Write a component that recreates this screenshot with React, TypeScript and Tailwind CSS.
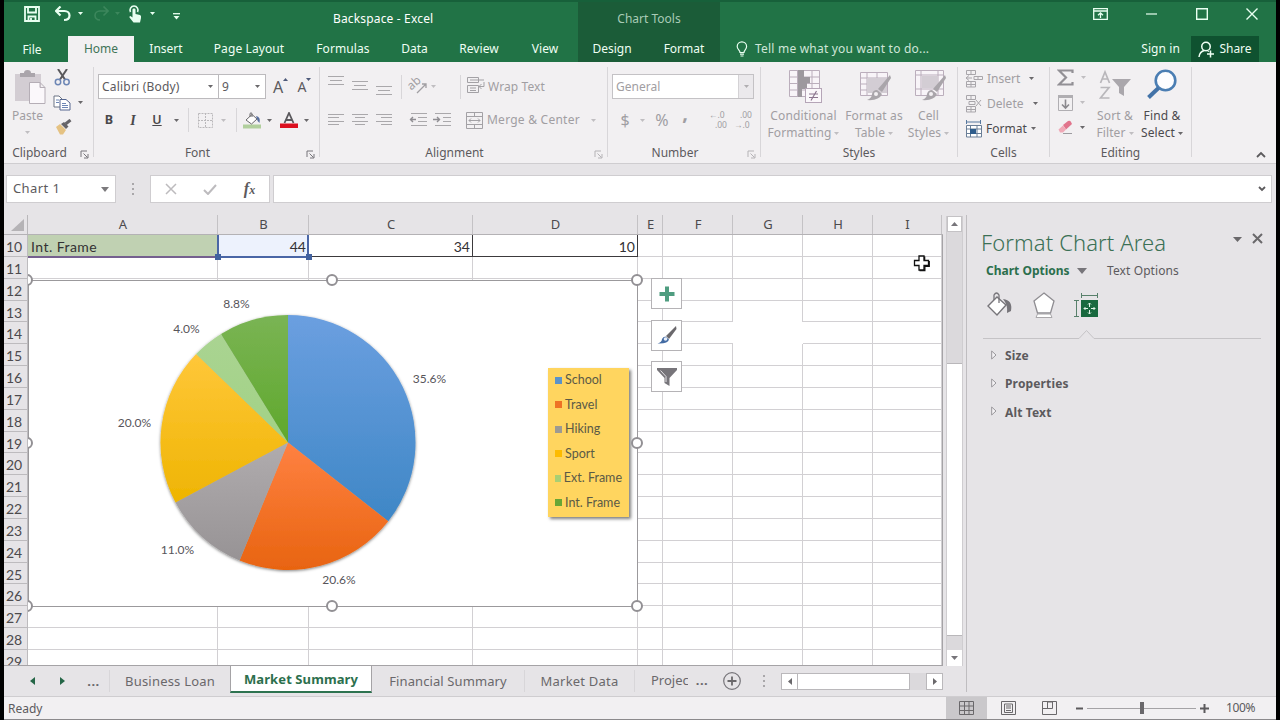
import React, { ReactNode } from 'react';
import clsx from 'clsx';

interface BoxProps {
  className?: string;
  children?: ReactNode;
}

interface IconProps {
  w: number;
  h: number;
  className?: string;
  children: ReactNode;
}

const Icon: React.FC<IconProps> = ({ w, h, className, children }) => (
  <svg width={w} height={h} viewBox={`0 0 ${w} ${h}`} fill="none" className={clsx('shrink-0', className)}>
    {children}
  </svg>
);

const Cell: React.FC<BoxProps> = ({ className, children }) => (
  <div className={clsx('flex shrink-0 items-center justify-center whitespace-nowrap', className)}>{children}</div>
);

const Caret: React.FC<{ className?: string }> = ({ className = 'text-[#6a686b]' }) => (
  <Icon w={5} h={3} className={className}>
    <path d="M0 0H5L2.5 3Z" fill="currentColor" />
  </Icon>
);

const Sep: React.FC<{ className?: string }> = ({ className = 'h-6' }) => (
  <div className={clsx('w-px shrink-0 bg-[#d8d6d9]', className)} />
);

const Launcher: React.FC<{ className?: string }> = ({ className = 'text-[#77757a]' }) => (
  <Icon w={9} h={9} className={className}>
    <path d="M1 7V1H7M3.5 3.5L7.5 7.5M8 4V8H4" stroke="currentColor" />
  </Icon>
);

/* ---------- Title bar and tabs ---------- */

const TitleBar = () => (
  <div className="flex h-9 border-t-2 border-[#17603a] text-white">
    <div className="flex w-[574px] items-start">
      <Cell className="ml-[20px] mt-[4px] w-4">
        <Icon w={16} h={16}>
          <path d="M1 1H15V15H1ZM4 1V6.5H12V1M4.5 15V10.5H11.5V15M7 12V15" stroke="#e9fff1" strokeWidth="1.8" />
        </Icon>
      </Cell>
      <Cell className="ml-[15px] mt-[4px] w-4">
        <Icon w={16} h={16}>
          <path d="M1 5H9.5C12.5 5 14.5 7 14.5 9.5S12.5 14 9 14M5.500 .5L1 5L5.500 9.500" stroke="#e9fff1" strokeWidth="2.2" />
        </Icon>
      </Cell>
      <Cell className="mt-[10px] w-[18px]"><Caret className="text-[#e9fff1]" /></Cell>
      <Cell className="ml-[4px] mt-[4px] w-4">
        <Icon w={16} h={16}>
          <path d="M15 5H7C4 5 2 7 2 9.500S4 14 7 14M10.500 .5L15 5L10.500 9.500" stroke="#3c875c" strokeWidth="1.6" />
        </Icon>
      </Cell>
      <Cell className="mt-[10px] w-[16px]"><Caret className="text-[#3c875c]" /></Cell>
      <Cell className="ml-[2px] mt-[3px] w-4">
        <Icon w={14} h={18}>
          <path d="M2.500 7A4 4 0 1 1 9.500 7" stroke="#e9fff1" strokeWidth="1.600" />
          <path d="M4.500 4.500C4.500 3 7.500 3 7.500 4.500V9L12 10Q13.500 10.500 13 13L12 17.500H5.500L1.500 12.500Q1 11 2.500 11L4.500 12.500Z" fill="#e9fff1" />
        </Icon>
      </Cell>
      <Cell className="mt-[10px] w-[18px]"><Caret className="text-[#e9fff1]" /></Cell>
      <Cell className="ml-[8px] mt-[11px] w-[14px]">
        <Icon w={7} h={7}>
          <path d="M0 .7H7" stroke="#e9fff1" strokeWidth="1.300" />
          <path d="M.5 3H6.500L3.500 6.500Z" fill="#e9fff1" />
        </Icon>
      </Cell>
      <div className="ml-[150px] mt-[8px] whitespace-nowrap text-[12px] leading-[18px] tracking-[0.16px]">Backspace - Excel</div>
    </div>
    <div className="w-[142px] bg-[#1b5c38] pt-[8px] text-center text-[12px] leading-[18px] text-[#a9cbb6]">Chart Tools</div>
    <div className="flex flex-1 items-start justify-end pt-[4px]">
      <Cell className="h-4 w-[50px]">
        <Icon w={15} h={12} className="-ml-[2px]">
          <path d="M.7 .7H14.300V11.300H.7ZM.7 3H14.300M7.500 10V5M5 7.300L7.500 4.800L10 7.300" stroke="#e9fff1" strokeWidth="1.300" />
        </Icon>
      </Cell>
      <Cell className="h-4 w-[51px]"><Icon w={11} h={2}><path d="M0 1H11" stroke="#e9fff1" strokeWidth="1.200" /></Icon></Cell>
      <Cell className="h-4 w-[50px]"><Icon w={12} h={12}><path d="M.7 .7H11.300V11.300H.7Z" stroke="#e9fff1" strokeWidth="1.400" /></Icon></Cell>
      <Cell className="h-4 w-[49px]"><Icon w={12} h={12}><path d="M.5 .5L11.500 11.500M11.500 .5L.5 11.500" stroke="#e9fff1" strokeWidth="1.400" /></Icon></Cell>
    </div>
  </div>
);

const TabRow = () => (
  <div className="flex h-[26px] text-[12px] leading-[26px] text-[#effff4]">
    <Cell className="w-[64px] pr-2 pt-px">File</Cell>
    <Cell className="w-[66px] bg-[#f2f0f2] text-[#3f7457]">Home</Cell>
    <Cell className="w-[64px]">Insert</Cell>
    <Cell className="w-[102px] tracking-[0.1px]">Page Layout</Cell>
    <Cell className="w-[86px] tracking-[0.1px]">Formulas</Cell>
    <Cell className="w-[57px]">Data</Cell>
    <Cell className="w-[72px] tracking-[0.1px]">Review</Cell>
    <Cell className="w-[63px] pr-[3px]">View</Cell>
    <Cell className="w-[68px] bg-[#1b5c38]">Design</Cell>
    <Cell className="w-[74px] bg-[#1b5c38] pl-[2px]">Format</Cell>
    <Cell className="ml-[15px] w-[14px]">
      <Icon w={12} h={16}>
        <path d="M4 11.500C4 9 1.200 8.500 1.200 5.500A4.600 4.600 0 0 1 10.600 5.500C10.600 8.500 8 9 8 11.500ZM4 13.200H8M4.500 15H7.500" stroke="#e9fff1" strokeWidth="1.200" />
      </Icon>
    </Cell>
    <Cell className="ml-[6px] tracking-[0.21px] text-[#cfe6d8]">Tell me what you want to do...</Cell>
    <div className="flex-1" />
    <Cell className="mr-[11px] tracking-[0.1px]">Sign in</Cell>
    <Cell className="mr-[17px] w-[68px] gap-[4px] bg-[#0f5230]">
      <Icon w={17} h={17}>
        <path d="M8 1.200A4 4 0 0 1 8 9.700A4 4 0 0 1 8 1.200M1 16C1.500 12 4 10 6.500 9.500M9.500 9.500L11 10.500M12.500 9.500V16.500M9 13H16" stroke="#effff4" strokeWidth="1.500" />
      </Icon>
      Share
    </Cell>
  </div>
);

/* ---------- Ribbon ---------- */

interface GroupProps {
  title: string;
  className: string;
  launcher?: 'on' | 'off';
  children: ReactNode;
}

const Group: React.FC<GroupProps> = ({ title, className, launcher, children }) => (
  <div className={clsx('flex shrink-0', className)}>
    <div className="flex min-w-0 flex-1 flex-col">
      <div className="h-[82px]">{children}</div>
      <div className="flex h-[20px] items-center">
        <div className="flex-1 text-center text-[#5c5a5d]">{title}</div>
        {launcher && (
          <Cell className="w-[18px]">
            <Launcher className={launcher === 'on' ? 'mt-[2px] text-[#77757a]' : 'mt-[2px] text-[#b5b3b6]'} />
          </Cell>
        )}
      </div>
    </div>
    <Sep className="mt-[5px] h-[90px]" />
  </div>
);

const Clipboard = () => (
  <Group title="Clipboard" className="w-[90px]" launcher="on">
    <div className="flex">
      <div className="flex w-[47px] flex-col items-center">
        <Icon w={32} h={35} className="ml-[5px] mt-[8px]">
          <rect x="1" y="4" width="26" height="27" fill="#d3cdd3" />
          <path d="M6 7V3H10Q10 0 13.500 0T17 3H21V7Z" fill="#aaa5ab" />
          <path d="M15.500 12.500H26L31 17.500V33.500H15.500ZM26 12.500V17.500H31" fill="#fbf8fb" stroke="#b5aeb6" />
        </Icon>
        <div className="mt-[2px] leading-[18px] text-[#a19ea2]">Paste</div>
        <Caret className="mt-[6px] text-[#c0bec1]" />
      </div>
      <div className="flex flex-col pt-[7px]">
        <Cell className="h-[17px] w-[22px]">
          <Icon w={17} h={17}>
            <path d="M4 0L11 10.500M13 0L6 10.500" stroke="#5a595c" strokeWidth="2" />
            <circle cx="4" cy="13" r="2.700" stroke="#6d86b5" strokeWidth="1.500" />
            <circle cx="12.500" cy="13" r="2.700" stroke="#6d86b5" strokeWidth="1.500" />
          </Icon>
        </Cell>
        <div className="mt-[8px] flex items-center">
          <Cell className="h-[17px] w-[22px]">
            <Icon w={18} h={16}>
              <path d="M1 1H6L9 4V12H1Z" fill="#fff" stroke="#6d7485" />
              <path d="M7 4.500H13L17 8V15H7Z" fill="#fff" stroke="#56678f" />
              <path d="M3 5H6M3 7.500H6M9 8.500H13M9 10.500H15M9 12.500H15" stroke="#6d86b5" />
            </Icon>
          </Cell>
          <Caret className="ml-[5px] text-[#6a686b]" />
        </div>
        <Cell className="mt-[7px] h-[17px] w-[24px]">
          <Icon w={17} h={16}>
            <path d="M1 8L5 5L11 11L8 15.500H5Z" fill="#e5c283" />
            <path d="M6 5L9 3L13.500 7.500L11 10Z" fill="#666468" />
            <path d="M10.500 5L15.500 1" stroke="#666468" strokeWidth="3" />
          </Icon>
        </Cell>
      </div>
    </div>
  </Group>
);

const FontGroup = () => (
  <Group title="Font" className="w-[226px]" launcher="on">
    <div className="flex items-center pl-[4px] pt-[12px]">
      <div className="flex h-[25px] w-[121px] items-center justify-between border border-[#bcbabd] bg-white pl-[3px] pr-[5px] text-[#5c5a5d]">
        <span className="tracking-[0.2px]">Calibri (Body)</span>
        <Caret />
      </div>
      <div className="flex h-[25px] w-[47px] items-center justify-between border border-l-0 border-[#bcbabd] bg-white pl-[3px] pr-[5px] text-[#5c5a5d]">
        <span>9</span>
        <Caret />
      </div>
      <Cell className="ml-[7px] w-[15px]">
        <span className="text-[16px] leading-[16px] text-[#5c5a5d]">A</span>
        <span className="mb-[14px]"><Icon w={5} h={3}><path d="M0 3H5L2.500 0Z" fill="#4e5a7a" /></Icon></span>
      </Cell>
      <Cell className="ml-[9px] w-[15px]">
        <span className="text-[14px] leading-[16px] text-[#5c5a5d]">A</span>
        <span className="mb-[14px]"><Icon w={5} h={3}><path d="M0 0H5L2.500 3Z" fill="#4e5a7a" /></Icon></span>
      </Cell>
    </div>
    <div className="mt-[9px] flex h-6 items-center pl-[4px] text-[#4a484b]">
      <Cell className="w-[22px] text-[12.500px] font-bold">B</Cell>
      <Cell className="w-[26px] font-['Liberation_Serif'] text-[14px] font-bold italic">I</Cell>
      <Cell className="w-[22px] text-[12.500px] font-semibold underline">U</Cell>
      <Cell className="w-[16px]"><Caret /></Cell>
      <Sep className="ml-[4px] h-6" />
      <Cell className="ml-[8px] w-[17px]">
        <Icon w={15} h={15}>
          <path d="M.5 .5H14.500V14.500H.5ZM7.500 0V15M0 7.500H15" stroke="#bab8bb" strokeDasharray="2 1" />
        </Icon>
      </Cell>
      <Cell className="ml-px w-[16px]"><Caret className="text-[#c0bec1]" /></Cell>
      <Sep className="ml-[5px] h-6" />
      <Cell className="ml-[5px] w-[20px]">
        <Icon w={19} h={17}>
          <rect x="0" y="12.500" width="18" height="4" fill="#b1cf9d" />
          <path d="M3 8L9 2.500L14 7L8.500 12Z" fill="#fff" stroke="#6a686b" />
          <path d="M7 5V1.500Q8 0 9 1.500V5" stroke="#6a686b" />
          <path d="M13 4Q18 5 16.500 11Q14 9 14 7Z" fill="#586f9e" />
        </Icon>
      </Cell>
      <Cell className="w-[15px]"><Caret /></Cell>
      <Cell className="ml-[2px] w-[19px]">
        <Icon w={18} h={16}>
          <path d="M4.500 11L9 1L13.500 11M6 8H12" stroke="#5a585c" strokeWidth="1.800" />
          <rect x="0" y="11.500" width="18" height="4.500" fill="#dc1020" />
        </Icon>
      </Cell>
      <Cell className="w-[16px]"><Caret /></Cell>
    </div>
  </Group>
);

const Lines: React.FC<{ className?: string; d: string }> = ({ className, d }) => (
  <Icon w={16} h={12} className={className}>
    <path d={d} stroke="#aaa8ab" />
  </Icon>
);

const Alignment = () => (
  <Group title="Alignment" className="w-[288px]" launcher="off">
    <div className="flex h-[25px] items-start pl-[8px] pt-[1px] mt-[12px]">
      <Lines className="mt-[1px]" d="M0 .5H16M2 4.500H14M0 8.500H16" />
      <Lines className="ml-[8px] mt-[6px]" d="M0 .5H16M2 4.500H14M0 8.500H16" />
      <Lines className="ml-[8px] mt-[11px]" d="M0 .5H16M2 4.500H14M0 8.500H16" />
      <Sep className="ml-[9px] h-[24px]" />
      <Cell className="ml-[8px] mt-[2px] w-[18px]">
        <Icon w={18} h={17} className="overflow-visible">
          <text x="-1" y="10" fontSize="12" fill="#a19fa3" transform="rotate(-42 5 9)">ab</text>
          <path d="M7 16L16 7M12 7H16V11" stroke="#a19fa3" strokeWidth="1.300" />
        </Icon>
      </Cell>
      <Caret className="ml-[3px] mt-[10px] text-[#c0bec1]" />
      <Sep className="ml-[24px] h-[24px]" />
      <Cell className="ml-[6px] mt-[2px] w-[18px]">
        <Icon w={18} h={17}>
          <path d="M.5 .5H11.500V5.500H.5ZM.5 8.500H11.500V15.500H.5ZM3 3H17M3 11H9M3 13.500H9M17 5V9.500H12M14.500 7L12 9.500L14.500 12" stroke="#a3a1a5" />
        </Icon>
      </Cell>
      <span className="ml-[3px] mt-[3px] whitespace-nowrap leading-[18px] tracking-[0.1px] text-[#a19ea2]">Wrap Text</span>
    </div>
    <div className="mt-[9px] flex h-6 items-center pl-[8px]">
      <Lines d="M0 .5H16M0 3.500H11M0 7.500H16M0 10.500H11" />
      <Lines className="ml-[8px]" d="M0 .5H16M3 3.500H13M0 7.500H16M3 10.500H13" />
      <Lines className="ml-[8px]" d="M0 .5H16M5 3.500H16M0 7.500H16M5 10.500H16" />
      <Sep className="ml-[9px]" />
      <Icon w={18} h={14} className="ml-[7px]">
        <path d="M2 .5H18M9 4.500H18M9 8.500H18M2 12.500H18" stroke="#aaa8ab" />
        <path d="M7 6.500H1M4 4L1.500 6.500L4 9" stroke="#8f8d92" strokeWidth="1.400" />
      </Icon>
      <Icon w={18} h={14} className="ml-[6px]">
        <path d="M2 .5H18M10 4.500H18M10 8.500H18M2 12.500H18" stroke="#aaa8ab" />
        <path d="M0 6.500H7M4 4L6.500 6.500L4 9" stroke="#8f8d92" strokeWidth="1.400" />
      </Icon>
      <Sep className="ml-[8px]" />
      <Icon w={17} h={17} className="ml-[6px]">
        <path d="M.5 .5H16.500V16.500H.5ZM.5 4.500H16.500M.5 12.500H16.500M8.500 0V4M8.500 13V17M3 8.500H14M5 6.500L3 8.500L5 10.500M12 6.500L14 8.500L12 10.500" stroke="#a3a1a5" />
      </Icon>
      <span className="ml-[4px] w-[94px] whitespace-nowrap tracking-[0.24px] text-[#a19ea2]">Merge &amp; Center</span>
      <Caret className="ml-[10px] text-[#c0bec1]" />
    </div>
  </Group>
);

const NumberGroup = () => (
  <Group title="Number" className="w-[153px]" launcher="off">
    <div className="pl-[4px] pt-[12px]">
      <div className="flex h-[25px] w-[142px] items-center border border-[#c4c2c5] bg-white pl-[3px] text-[#a19ea2]">
        <span className="flex-1">General</span>
        <Cell className="h-full w-[15px] border-l border-[#d4d2d5] bg-[#ebe9ec]"><Caret className="text-[#b0aeb1]" /></Cell>
      </div>
    </div>
    <div className="mt-[9px] flex h-6 items-center pl-[8px] text-[#a09ea2]">
      <Cell className="w-[18px] text-[16px]">$</Cell>
      <Cell className="w-[16px]"><Caret className="text-[#c0bec1]" /></Cell>
      <Cell className="ml-[2px] w-[20px] text-[16px]">%</Cell>
      <Cell className="ml-[3px] h-6 w-[20px] pb-[14px] text-[20px] font-bold leading-[10px]">,</Cell>
      <Sep className="ml-[6px]" />
      <div className="ml-[7px] flex w-[18px] flex-col whitespace-nowrap text-[8.500px] leading-[12px] -space-y-[2px]">
        <span>←.0</span>
        <span className="text-right">.00</span>
      </div>
      <div className="ml-[7px] flex w-[18px] flex-col whitespace-nowrap text-[8.500px] leading-[12px] -space-y-[2px]">
        <span className="text-right">.00</span>
        <span>→.0</span>
      </div>
    </div>
  </Group>
);

const Big: React.FC<{ className: string; icon: ReactNode; top: string; bottom: string; dark?: boolean }> = ({ className, icon, top, bottom, dark }) => (
  <div className={clsx('flex shrink-0 flex-col items-center whitespace-nowrap pt-[7px] leading-[18px]', dark ? 'text-[#4c4a4d]' : 'text-[#a19ea2]', className)}>
    <div className="flex h-[38px] items-start">{icon}</div>
    <div className="tracking-[0.15px]">{top}</div>
    <div className="-mt-px flex items-center gap-[3px] tracking-[0.1px]">
      {bottom}
      <Caret className={dark ? 'text-[#6a686b]' : 'text-[#c0bec1]'} />
    </div>
  </div>
);

const brush = (
  <>
    <path d="M31 6L19 20L23 23L32 9Z" fill="#a9a5aa" />
    <path d="M18 21L23 25Q20 32 8 31Q13 29 13 25Q14 21 18 21Z" fill="#a9a5aa" />
    <circle cx="17" cy="25" r="2" fill="#f3f0f3" />
  </>
);

const Styles = () => (
  <Group title="Styles" className="w-[197px]">
    <div className="flex">
      <Big
        className="w-[85px]"
        top="Conditional"
        bottom="Formatting"
        icon={
          <Icon w={34} h={35} className="ml-[2px]">
            <path d="M1.500 1.500H31.500V27.500H1.500ZM1.500 8H31.500M1.500 14.500H31.500M1.500 21H31.500M9.500 1.500V27.500M24 1.500V27.500" stroke="#bbaebc" fill="#f8f4f8" />
            <path d="M10 1H16V8H22V14H19V20H14V28H10Z" fill="#9d989e" />
            <rect x="17.500" y="19.500" width="16" height="14" fill="#fbf8fb" stroke="#b5a5b7" />
            <path d="M21 25H30M21 28.500H30M28.500 22L23 31.500" stroke="#8d7790" strokeWidth="1.200" />
          </Icon>
        }
      />
      <Big
        className="w-[56px]"
        top="Format as"
        bottom="Table"
        icon={
          <Icon w={33} h={33} className="ml-[3px]">
            <path d="M1.500 3.500H28.500V26.500H1.500ZM1.500 9H28.500M1.500 15H28.500M1.500 21H28.500M8 3.500V26.500M18 3.500V26.500" stroke="#bbaebc" fill="#f8f4f8" />
            <rect x="8" y="9" width="20" height="15" fill="#d3cdd4" />
            {brush}
          </Icon>
        }
      />
      <Big
        className="w-[53px]"
        top="Cell"
        bottom="Styles"
        icon={
          <Icon w={33} h={33} className="ml-[3px]">
            <path d="M1.500 1.500H29.500V26.500H1.500ZM1.500 6H29.500M1.500 20H29.500M7 1.500V26.500M24 1.500V26.500" stroke="#bbaebc" fill="#f8f4f8" />
            <rect x="8" y="7" width="16" height="12" fill="#d3cdd4" />
            {brush}
          </Icon>
        }
      />
    </div>
  </Group>
);

const CellsGroup = () => (
  <Group title="Cells" className="w-[92px]">
    <div className="flex flex-col pl-[7px] pt-[4px]">
      <div className="flex h-[25px] items-center text-[#a19ea2]">
        <Icon w={18} h={18}>
          <path d="M1.500 .5H10.500V4.500H1.500ZM6 .5V4.500M1.500 11.500H10.500V17H1.500ZM6 11.500V17M1.500 14.500H10.500M9 6.500H17.500V9.500H9ZM13 6.500V9.500M1 8H7M4 5.500L1 8L4 10.500" stroke="#a9a6ab" />
        </Icon>
        <span className="ml-[4px] w-[38px]">Insert</span>
        <Caret className="ml-[4px] text-[#6a686b]" />
      </div>
      <div className="flex h-[25px] items-center text-[#a19ea2]">
        <Icon w={18} h={18}>
          <path d="M1.500 .5H10.500V4.500H1.500ZM6 .5V4.500M1.500 11.500H10.500V17H1.500ZM6 11.500V17M1.500 14.500H10.500M4 6.500H10V9.500H4ZM11 5L16 11M16 5L11 11" stroke="#a9a6ab" />
        </Icon>
        <span className="ml-[4px] w-[42px]">Delete</span>
        <Caret className="ml-[4px] text-[#6a686b]" />
      </div>
      <div className="flex h-[25px] items-center text-[#4c4a4d]">
        <Icon w={18} h={18}>
          <path d="M1.500 5.500H16.500V17H1.500ZM1.500 9H16.500M1.500 13.500H16.500M5.500 5.500V17M12 5.500V17" stroke="#6a7e97" fill="#fff" />
          <rect x="5" y="9" width="6" height="5" fill="#2f5d8c" />
          <path d="M1.500 0V4M15.500 0V4M2 2H15" stroke="#56789f" />
        </Icon>
        <span className="ml-[3px] w-[43px]">Format</span>
        <Caret className="ml-[2px] text-[#6a686b]" />
      </div>
    </div>
  </Group>
);

const Editing = () => (
  <Group title="Editing" className="w-[142px]">
    <div className="flex">
      <div className="flex w-[43px] flex-col pl-[7px] pt-[3px]">
        <div className="flex h-[25px] items-center">
          <Icon w={17} h={17}><path d="M15.500 4V1.500H2L9 8.500L2 15.500H15.500V13" stroke="#929095" strokeWidth="2.200" /></Icon>
          <Caret className="ml-[7px] text-[#c0bec1]" />
        </div>
        <div className="flex h-[25px] items-center">
          <Icon w={17} h={17}>
            <path d="M1.500 1.500H15.500V16.500H1.500Z" stroke="#b0aeb2" />
            <path d="M1 1H16V4H1Z" fill="#b0aeb2" />
            <path d="M8.500 5.500V14M5 10.500L8.500 14L12 10.500" stroke="#8b898e" strokeWidth="1.600" />
          </Icon>
          <Caret className="ml-[6px] text-[#c0bec1]" />
        </div>
        <div className="flex h-[25px] items-center">
          <Icon w={17} h={15}>
            <path d="M6 5L11 1Q13 0 14 2L15 4L9 9.500Z" fill="#e1748c" />
            <path d="M1.500 9.500L6 5.500L9 9.500L6 12.500H3Z" fill="#f0a9b7" />
            <path d="M6 13.500H15" stroke="#9d9ba0" />
          </Icon>
          <Caret className="ml-[6px] text-[#6a686b]" />
        </div>
      </div>
      <Big
        className="w-[44px]"
        top="Sort &amp;"
        bottom="Filter"
        icon={
          <Icon w={32} h={33}>
            <path d="M1.500 14L6 3L10.500 14M3 10H9M1.500 18.500H10L1.500 29H10.500" stroke="#b9b7bb" strokeWidth="1.700" />
            <path d="M13 10H32L25 18V27L20 24V18Z" fill="#aaa7ac" />
          </Icon>
        }
      />
      <Big
        className="w-[50px]"
        top="Find &amp;"
        bottom="Select"
        dark
        icon={
          <Icon w={32} h={31}>
            <circle cx="19.500" cy="11.500" r="9.800" fill="#fdfdff" stroke="#4b7eb3" strokeWidth="2.600" />
            <path d="M12.500 19L2.500 28.500" stroke="#4373a8" strokeWidth="4" />
          </Icon>
        }
      />
    </div>
  </Group>
);

const Ribbon = () => (
  <div className="flex h-[102px] shrink-0 border-b border-[#cfcdd0] bg-[#f2f0f2] text-[12px]">
    <Clipboard />
    <FontGroup />
    <Alignment />
    <NumberGroup />
    <Styles />
    <CellsGroup />
    <Editing />
    <div className="flex flex-1 items-end justify-end pb-[5px] pr-[10px]">
      <Icon w={10} h={7}><path d="M1 6L5 2L9 6" stroke="#5c5a5d" strokeWidth="1.800" /></Icon>
    </div>
  </div>
);

/* ---------- Formula bar ---------- */

const Dots = () => (
  <Icon w={2} h={12}>
    <path d="M0 0H2V2H0ZM0 5H2V7H0ZM0 10H2V12H0Z" fill="#a9a7aa" />
  </Icon>
);

const FormulaBar = () => (
  <div className="flex h-[51px] shrink-0 items-start bg-[#e6e4e7] pl-[2px] pt-[11px]">
    <div className="flex h-[28px] w-[110px] items-center justify-between border border-[#cfcdd0] bg-white pl-[6px] pr-[6px] text-[13px] tracking-[0.4px] text-[#5c5a5d]">
      Chart 1
      <Icon w={8} h={5}><path d="M0 0H8L4 5Z" fill="#7c7a7d" /></Icon>
    </div>
    <Cell className="h-[28px] w-[34px]"><Dots /></Cell>
    <div className="flex h-[28px] w-[120px] items-center border border-[#cfcdd0] bg-white">
      <Cell className="w-[39px]"><Icon w={12} h={12}><path d="M1 1L11 11M11 1L1 11" stroke="#bdbbbe" strokeWidth="1.500" /></Icon></Cell>
      <Cell className="w-[40px]"><Icon w={14} h={11}><path d="M1 6L5 10L13 1" stroke="#bdbbbe" strokeWidth="2" /></Icon></Cell>
      <Cell className="w-[39px] font-['Liberation_Serif'] text-[16px] font-bold italic leading-[16px] text-[#5c5a5d]">f<span className="pt-[2px] text-[12px]">x</span></Cell>
    </div>
    <div className="ml-[3px] flex h-[28px] w-[999px] items-center justify-end border border-[#cfcdd0] bg-white pr-[5px]">
      <Icon w={8} h={6}><path d="M1 1L4 4L7 1" stroke="#5c5a5d" strokeWidth="1.800" /></Icon>
    </div>
  </div>
);

/* ---------- Sheet ---------- */

const columns = [
  { id: 'A', w: 'w-[190px]' },
  { id: 'B', w: 'w-[91px]' },
  { id: 'C', w: 'w-[164px]' },
  { id: 'D', w: 'w-[165px]' },
  { id: 'E', w: 'w-[25px]' },
  { id: 'F', w: 'w-[70px]' },
  { id: 'G', w: 'w-[70px]' },
  { id: 'H', w: 'w-[70px]' },
  { id: 'I', w: 'w-[69px]' },
];

const rows = Array.from({ length: 19 }, (_, i) => 11 + i);

const ColumnHeader = () => (
  <div className="flex h-[20px] shrink-0 border-b border-[#b4b2b5] text-[13px] leading-[18px] text-[#4c4a4d]">
    <div className="flex w-[24px] items-end justify-end border-r border-[#b9b7ba] pb-[3px] pr-[3px]">
      <Icon w={13} h={12}><path d="M13 0V12H0Z" fill="#b5b3b6" /></Icon>
    </div>
    {columns.map((c) => (
      <div key={c.id} className={clsx('shrink-0 border-r border-[#c4c2c5] pl-px text-center', c.w)}>{c.id}</div>
    ))}
  </div>
);

const RowHead: React.FC<BoxProps> = ({ className, children }) => (
  <div className={clsx('w-[24px] shrink-0 overflow-hidden border-b border-r border-[#bdbbbe] bg-[#e6e4e7] pl-[2px] pt-px text-[14px] leading-[22px] text-[#4c4a4d]', className)}>{children}</div>
);

const slices = [
  { name: 'School', value: 35.6, from: '#6b9fe0', to: '#3f87c6', y1: 0, y2: 0.8 },
  { name: 'Travel', value: 20.6, from: '#ff8142', to: '#e86410', y1: 0.5, y2: 1 },
  { name: 'Hiking', value: 11.0, from: '#b0acae', to: '#959193', y1: 0.5, y2: 1 },
  { name: 'Sport', value: 20.0, from: '#ffc73a', to: '#eeb400', y1: 0.15, y2: 0.75 },
  { name: 'Ext. Frame', value: 4.0, from: '#abd494', to: '#a2d285', y1: 0, y2: 0.5 },
  { name: 'Int. Frame', value: 8.8, from: '#7ab454', to: '#5fa82c', y1: 0, y2: 0.5 },
];

const legendColors = ['bg-[#5b93c9]', 'bg-[#ee7325]', 'bg-[#9d9a92]', 'bg-[#fdbb00]', 'bg-[#a9cf73]', 'bg-[#68a635]'];

const labels = [
  { text: '35.6%', x: 400.5, y: 102 },
  { text: '20.6%', x: 310, y: 303 },
  { text: '11.0%', x: 148.5, y: 273 },
  { text: '20.0%', x: 105.5, y: 145.5 },
  { text: '4.0%', x: 157.5, y: 51.5 },
  { text: '8.8%', x: 207.5, y: 27 },
];

const CX = 259;
const CY = 161.5;
const R = 127.5;

const point = (pct: number) => {
  const a = (pct / 100) * Math.PI * 2;
  return `${(CX + R * Math.sin(a)).toFixed(2)} ${(CY - R * Math.cos(a)).toFixed(2)}`;
};

const Pie = () => {
  let start = 0;
  return (
    <svg width="608" height="325" viewBox="0 0 608 325" className="overflow-visible">
      <defs>
        {slices.map((s, i) => (
          <linearGradient key={s.name} id={`slice${i}`} gradientUnits="userSpaceOnUse" x1="0" x2="0" y1={CY - R + s.y1 * 2 * R} y2={CY - R + s.y2 * 2 * R}>
            <stop offset="0" stopColor={s.from} />
            <stop offset="1" stopColor={s.to} />
          </linearGradient>
        ))}
        <filter id="pieShadow" x="-10%" y="-10%" width="120%" height="120%">
          <feDropShadow dx="0" dy="1" stdDeviation="1.500" floodColor="#000" floodOpacity="0.5" />
        </filter>
      </defs>
      <g filter="url(#pieShadow)">
        {slices.map((s, i) => {
          const from = start;
          start += s.value;
          return <path key={s.name} d={`M${CX} ${CY}L${point(from)}A${R} ${R} 0 0 1 ${point(start)}Z`} fill={`url(#slice${i})`} />;
        })}
      </g>
      <g fontSize="12" fill="#57555a" textAnchor="middle" fontFamily="Lato, sans-serif">
        {labels.map((l) => (
          <text key={l.text} x={l.x} y={l.y}>{l.text}</text>
        ))}
      </g>
    </svg>
  );
};

const Legend = () => (
  <div className="absolute left-[519px] top-[87px] flex h-[149px] w-[81px] flex-col justify-between bg-[#ffd55f] px-[7px] pb-[6px] pt-[4px] font-['Lato'] text-[12.500px] leading-[16px] text-[#5b5a46] shadow-[2px_2px_3px_rgba(0,0,0,0.5)]">
    {slices.map((s, i) => (
      <div key={s.name} className="flex items-center gap-[3px] whitespace-nowrap">
        <span className={clsx('h-[7px] w-[7px]', legendColors[i])} />
        {s.name}
      </div>
    ))}
  </div>
);

const Handle: React.FC<{ className: string }> = ({ className }) => (
  <div className={clsx('absolute h-[12px] w-[12px] rounded-full border-2 border-[#929094] bg-white', className)} />
);

const ChartButton: React.FC<BoxProps> = ({ children }) => (
  <div className="flex h-[31px] w-[31px] items-center justify-center border border-[#b5b3b6] bg-white">{children}</div>
);

const ChartObject = () => (
  <>
    <div className="absolute left-[24px] top-[45px] h-[327px] w-[610px] overflow-visible border border-[#9b999c] bg-white">
      <Pie />
      <Legend />
      <div className="absolute -left-px -top-[7px] h-[340px] w-[12px] overflow-hidden">
        <Handle className="-left-[7px] top-0" />
        <Handle className="-left-[7px] top-[163px]" />
        <Handle className="-left-[7px] top-[326px]" />
      </div>
      <Handle className="left-[297px] -top-[7px]" />
      <Handle className="left-[297px] top-[319px]" />
      <Handle className="left-[602px] -top-[7px]" />
      <Handle className="left-[602px] top-[156px]" />
      <Handle className="left-[602px] top-[319px]" />
    </div>
    <div className="absolute left-[647px] top-[43px] flex flex-col gap-[10.500px]">
      <ChartButton>
        <Icon w={16} h={16}><path d="M8 .5V15.500M.5 8H15.500" stroke="#4f9d80" strokeWidth="4" /></Icon>
      </ChartButton>
      <ChartButton>
        <Icon w={20} h={20}>
          <path d="M19 1L9 11L12 14L19.500 4Z" fill="#6a686c" />
          <path d="M8.500 11.500L12 14.500Q11 19 .5 18.500Q5 17 5 14Q6 11.500 8.500 11.500Z" fill="#436ba3" />
          <circle cx="8.500" cy="14" r="1.800" fill="#e7effa" />
        </Icon>
      </ChartButton>
      <ChartButton>
        <Icon w={20} h={18}>
          <path d="M0 0H20V2L12.500 10V18L7.500 15V10L0 2Z" fill="#77757a" />
          <path d="M3.500 2.500L9 8.500V14" stroke="#e8e6e9" />
        </Icon>
      </ChartButton>
    </div>
  </>
);

const Selection = () => (
  <>
    <div className="absolute left-[24px] top-[21px] h-[2px] w-[190px] bg-[#75608f]" />
    <div className="absolute left-[213px] top-0 h-[23px] w-[92px] border-x-2 border-b-2 border-[#4a66a6]" />
    <div className="absolute left-[211px] top-[19px] h-[6px] w-[6px] bg-[#42629f]" />
    <div className="absolute left-[302px] top-[19px] h-[6px] w-[6px] bg-[#42629f]" />
    <div className="absolute left-[909px] top-[19px]">
      <Icon w={18} h={18}>
        <path d="M6 2H11V6.500H15.500V11.500H11V16H6V11.500H1.500V6.500H6Z" fill="#fff" stroke="#111" strokeWidth="1.300" />
        <path d="M11.600 2.500V6M16.200 7V12.200H11.800V16.600H6.500" stroke="#111" strokeWidth="1.400" />
      </Icon>
    </div>
  </>
);

const Sheet = () => (
  <div className="relative h-[431px] w-[939px] shrink-0 overflow-hidden border-b border-r border-[#a5a3a6] bg-white font-['Lato']">
    <div className="flex h-[22px] text-[14px] leading-[23px] text-[#333134]">
      <RowHead>10</RowHead>
      <div className="w-[190px] bg-[#c0d1b2] pl-[3px] tracking-[0.45px]">Int. Frame</div>
      <div className="w-[91px] bg-[#edf2fd] pr-[3px] text-right">44</div>
      <div className="w-[164px] border-b border-r border-[#3c3a3d] pr-[2px] text-right">34</div>
      <div className="w-[165px] border-b border-r border-[#3c3a3d] pr-[2px] text-right">10</div>
      {columns.slice(4).map((c) => (
        <div key={c.id} className={clsx('border-b border-r border-[#d2d0d3]', c.w)} />
      ))}
    </div>
    {rows.map((r) => (
      <div key={r} className="flex h-[21.830px]">
        <RowHead>{r}</RowHead>
        {columns.map((c) => (
          <div
            key={c.id}
            className={clsx(
              'shrink-0 border-[#d2d0d3]',
              c.w,
              !(c.id === 'G' && (r === 13 || r === 14)) && 'border-b',
              !((c.id === 'F' || c.id === 'G') && r === 14) && 'border-r',
            )}
          />
        ))}
      </div>
    ))}
    <ChartObject />
    <Selection />
  </div>
);

const VerticalScroll = () => (
  <div className="flex w-[17px] flex-col border-x border-[#cfcdd0] bg-[#dbd9dc]">
    <Cell className="h-[16px] border border-[#c4c2c5] bg-white"><Icon w={7} h={4}><path d="M0 4H7L3.500 0Z" fill="#77757a" /></Icon></Cell>
    <div className="mt-[131px] h-[273px] border-y border-[#b9b7ba] bg-white" />
    <div className="flex-1" />
    <Cell className="h-[16px] bg-white"><Icon w={7} h={4}><path d="M0 0H7L3.500 4Z" fill="#77757a" /></Icon></Cell>
  </div>
);

const TabBar = () => (
  <div className="flex h-[29px] items-start text-[13px] leading-[26px] text-[#6a686b]">
    <Cell className="ml-[13px] h-[29px] w-[30px]"><Icon w={5} h={8}><path d="M5 0V8L0 4Z" fill="#256647" /></Icon></Cell>
    <Cell className="h-[29px] w-[31px]"><Icon w={5} h={8}><path d="M0 0V8L5 4Z" fill="#256647" /></Icon></Cell>
    <Cell className="h-[29px] w-[31px] font-bold tracking-[0.5px]">...</Cell>
    <Sep className="mt-[4px] h-[22px] bg-[#a5a3a6]" />
    <Cell className="h-[29px] w-[120px] tracking-[0.2px]">Business Loan</Cell>
    <Cell className="-mt-px h-[28px] w-[142px] border-x border-b-2 border-[#a5a3a6] border-b-[#2e7350] bg-white pt-[2px] font-bold tracking-[0.1px] text-[#2c6f4d]">Market Summary</Cell>
    <Cell className="h-[29px] w-[152px] tracking-[0.1px]">Financial Summary</Cell>
    <Sep className="mt-[4px] h-[22px] bg-[#a5a3a6]" />
    <Cell className="h-[29px] w-[109px] tracking-[0.2px]">Market Data</Cell>
    <Sep className="mt-[4px] h-[22px] bg-[#a5a3a6]" />
    <div className="ml-[16px] h-[29px] w-[37px] overflow-hidden leading-[29px]">Project</div>
    <Cell className="h-[28px] w-[28px] font-bold tracking-[0.5px]">...</Cell>
    <Cell className="ml-[6px] h-[29px] w-[20px]">
      <Icon w={18} h={18}>
        <circle cx="9" cy="9" r="8.300" stroke="#77757a" strokeWidth="1.200" />
        <path d="M9 4.500V13.500M4.500 9H13.500" stroke="#6a686b" strokeWidth="1.800" />
      </Icon>
    </Cell>
    <Cell className="ml-[12px] h-[30px] w-[20px]"><Dots /></Cell>
    <div className="ml-[7px] mt-[7px] flex h-[17px] w-[162px] bg-[#dbd9dc]">
      <Cell className="w-[17px] border border-[#bab8bb] bg-white"><Icon w={4} h={7}><path d="M4 0V7L0 3.500Z" fill="#6a686b" /></Icon></Cell>
      <div className="w-[112px] border border-l-0 border-[#bab8bb] bg-white" />
      <div className="flex-1" />
      <Cell className="w-[17px] border border-[#bab8bb] bg-white"><Icon w={4} h={7}><path d="M0 0V7L4 3.500Z" fill="#6a686b" /></Icon></Cell>
    </div>
  </div>
);

/* ---------- Format pane ---------- */

const FormatPane = () => (
  <div className="flex flex-1 flex-col">
    <div className="flex h-[477px] flex-col border-l border-[#bfbdc0] pl-[14px]">
      <div className="mt-[11px] flex h-[33px] items-center">
        <div className="w-[250px] whitespace-nowrap text-[22px] font-light tracking-[0.1px] text-[#3b7055]">Format Chart Area</div>
        <Icon w={9} h={5} className="mb-[6px] ml-[2px]"><path d="M0 0H9L4.500 5Z" fill="#6a686b" /></Icon>
        <Icon w={11} h={11} className="mb-[8px] ml-[10px]"><path d="M1 1L10 10M10 1L1 10" stroke="#6a686b" strokeWidth="2" /></Icon>
      </div>
      <div className="flex h-[23px] items-center pl-[5px] text-[12px] text-[#5c5a5d]">
        <span className="w-[84px] whitespace-nowrap font-bold text-[#2c6f4d]">Chart Options</span>
        <Icon w={10} h={6} className="ml-[7px]"><path d="M0 0H10L5 6Z" fill="#77757a" /></Icon>
        <span className="ml-[20px] whitespace-nowrap tracking-[0.1px]">Text Options</span>
      </div>
      <div className="mt-[9px] flex h-[30px] items-start">
        <Icon w={28} h={26} className="ml-[5px] mt-[1px]">
          <path d="M2 14L11 5L20 13L11 23Z" fill="#fff" stroke="#77757a" strokeWidth="1.400" />
          <path d="M8 8V3Q10.500 -1 13 3V11" stroke="#77757a" strokeWidth="1.300" />
          <path d="M17 7Q27 8 25 19L21 21Q22 13 17 7Z" fill="#77757a" />
        </Icon>
        <Icon w={24} h={26} className="ml-[18px] mt-[1px]">
          <path d="M12 1L22 9L18.500 21H5.500L2 9Z" fill="#fff" stroke="#8f8d92" strokeWidth="1.300" />
          <path d="M5.500 22H18.500L20 25.500H4Z" fill="#fff" stroke="#a9a7aa" />
        </Icon>
        <Icon w={25} h={24} className="ml-[18px] mt-[2px]">
          <rect x="7" y="7" width="17" height="17" fill="#19693f" />
          <path d="M7.500 0V5M23.500 0V5M8 2.500H23M0 7.500H5M0 23.500H5M2.500 8V23" stroke="#58806b" />
          <path d="M15.500 10V14M15.500 17V21M10 15.500H14M17 15.500H21M14 11.500L15.500 10L17 11.500M14 19.500L15.500 21L17 19.500M11.500 14L10 15.500L11.500 17M19.500 14L21 15.500L19.500 17" stroke="#dff3e7" />
        </Icon>
      </div>
      <Icon w={282} h={12} className="mt-[8px]">
        <path d="M2 9.500H98L105.500 1.500L113 9.500H280" stroke="#c5c3c6" />
      </Icon>
      <div className="mt-px flex flex-col text-[12px] font-bold text-[#5c5a5d]">
        {['Size', 'Properties', 'Alt Text'].map((t) => (
          <div key={t} className="flex h-[28.300px] items-center tracking-[0.15px]">
            <Icon w={6} h={10} className="mb-[3px] ml-[10px] mr-[8px]"><path d="M.7 1V9L5 5Z" stroke="#98969a" fill="#f5f3f6" /></Icon>
            {t}
          </div>
        ))}
      </div>
    </div>
  </div>
);

/* ---------- Status bar ---------- */

const StatusBar = () => (
  <div className="flex h-[24px] shrink-0 items-center border-b border-t border-b-[#8b898c] border-t-[#cfcdd0] bg-[#f2f0f2] text-[12px] text-[#5c5a5d]">
    <div className="w-[942px] pl-[4px] pt-px">Ready</div>
    <Cell className="h-full w-[41px] bg-[#cac8cb]">
      <Icon w={15} h={14}><path d="M.5 .5H14.500V13.500H.5ZM.5 5H14.500M.5 9.500H14.500M5.500 .5V13.500M10 .5V13.500" stroke="#6a686b" /></Icon>
    </Cell>
    <Cell className="w-[42px]">
      <Icon w={15} h={14}><path d="M.5 .5H14.500V13.500H.5ZM3.500 3H11.500V11.500H3.500ZM5 5H10M5 7H10M5 9.500H10" stroke="#6a686b" /></Icon>
    </Cell>
    <Cell className="w-[41px]">
      <Icon w={15} h={14}><path d="M.5 .5H14.500V13.500H.5ZM5.500 0V7.500M10.500 0V7.500M0 7.500H10.500M5 1H10" stroke="#6a686b" /></Icon>
    </Cell>
    <Icon w={7} h={3} className="ml-[6px]"><path d="M0 1.500H7" stroke="#5c5a5d" strokeWidth="2" /></Icon>
    <div className="ml-[4px] flex h-[12px] w-[109px] items-center">
      <div className="h-px w-[53px] bg-[#a5a3a6]" />
      <div className="h-[12px] w-[4px] bg-[#6a686b]" />
      <div className="h-px flex-1 bg-[#a5a3a6]" />
    </div>
    <Icon w={9} h={9} className="ml-[4px]"><path d="M0 4.500H9M4.500 0V9" stroke="#5c5a5d" strokeWidth="2" /></Icon>
    <span className="ml-[17px] tracking-[-0.4px]">100%</span>
  </div>
);

export default function App() {
  return (
    <div className="flex h-[720px] w-[1280px] justify-center overflow-hidden bg-black font-['Noto_Sans',sans-serif]">
      <div className="flex w-[1272px] flex-col bg-[#e6e4e7]">
        <header className="shrink-0 bg-[#217346]">
          <TitleBar />
          <TabRow />
        </header>
        <Ribbon />
        <FormulaBar />
        <div className="flex h-[481px] shrink-0">
          <div className="flex w-[962px] flex-col">
            <div className="flex">
              <div className="flex w-[939px] flex-col">
                <ColumnHeader />
                <Sheet />
              </div>
              <div className="ml-[3px] mt-px flex">
                <VerticalScroll />
              </div>
            </div>
            <TabBar />
          </div>
          <FormatPane />
        </div>
        <StatusBar />
      </div>
    </div>
  );
}
